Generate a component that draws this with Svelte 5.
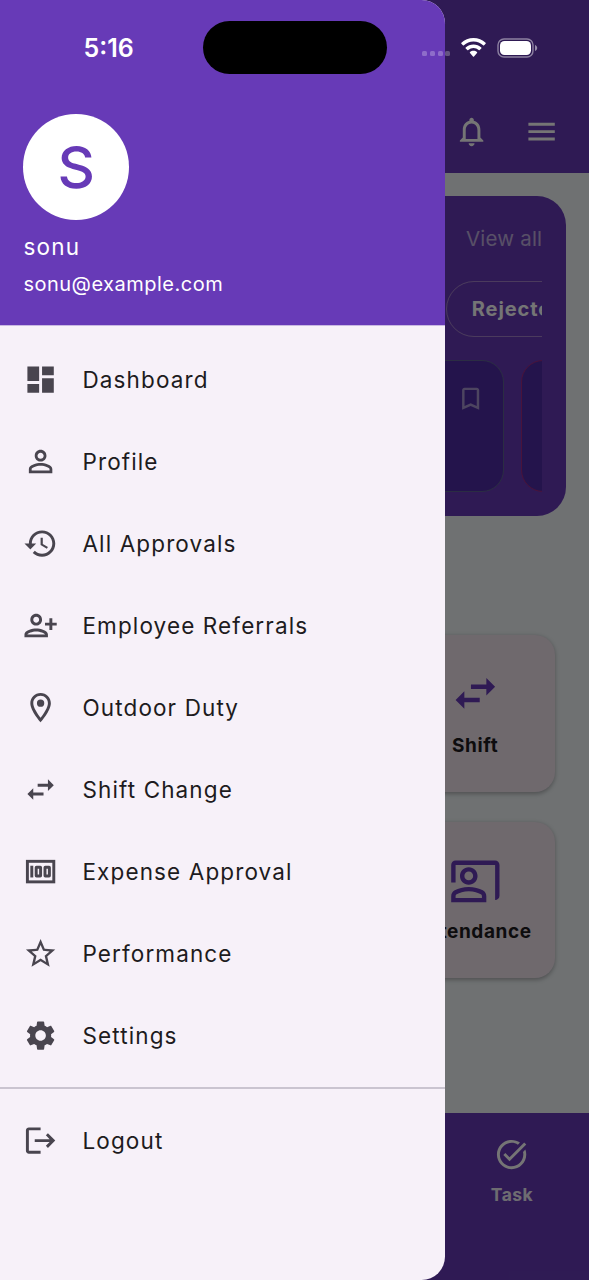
<script lang="ts">
  type MenuItem = {
    label: string;
    icon: string;
  };

  const menuItems: MenuItem[] = [
    { label: 'Dashboard', icon: 'dashboard' },
    { label: 'Profile', icon: 'person' },
    { label: 'All Approvals', icon: 'history' },
    { label: 'Employee Referrals', icon: 'personAdd' },
    { label: 'Outdoor Duty', icon: 'location' },
    { label: 'Shift Change', icon: 'swap' },
    { label: 'Expense Approval', icon: 'money' },
    { label: 'Performance', icon: 'star' },
    { label: 'Settings', icon: 'settings' },
  ];

  const tiles: MenuItem[] = [
    { label: 'Shift', icon: 'swap' },
    { label: 'Attendance', icon: 'coPresent' },
  ];

  const icons: Record<string, string> = {
    dashboard: 'M3 13h8V3H3v10zm0 8h8v-6H3v6zm10 0h8V11h-8v10zm0-18v6h8V3h-8z',
    person:
      'M12 5.9c1.16 0 2.1.94 2.1 2.1s-.94 2.1-2.1 2.1S9.9 9.16 9.9 8s.94-2.1 2.1-2.1m0 9c2.97 0 6.1 1.46 6.1 2.1v1.1H5.9V17c0-.64 3.13-2.1 6.1-2.1M12 4C9.79 4 8 5.79 8 8s1.79 4 4 4 4-1.79 4-4-1.79-4-4-4zm0 9c-2.67 0-8 1.34-8 4v3h16v-3c0-2.66-5.33-4-8-4z',
    history:
      'M13 3c-4.97 0-9 4.03-9 9H1l3.89 3.89.07.14L9 12H6c0-3.87 3.13-7 7-7s7 3.13 7 7-3.13 7-7 7c-1.93 0-3.68-.79-4.94-2.06l-1.42 1.42C8.27 19.99 10.51 21 13 21c4.97 0 9-4.03 9-9s-4.03-9-9-9zm-1 5v5l4.28 2.54.72-1.21-3.5-2.08V8H12z',
    personAdd:
      'M13 8c0-2.21-1.79-4-4-4S5 5.79 5 8s1.79 4 4 4 4-1.79 4-4zm-2 0c0 1.1-.9 2-2 2s-2-.9-2-2 .9-2 2-2 2 .9 2 2zM1 18v2h16v-2c0-2.66-5.33-4-8-4s-8 1.34-8 4zm2 0c.2-.71 3.3-2 6-2 2.69 0 5.78 1.28 6 2H3zm17-3v-3h3v-2h-3V7h-2v3h-3v2h3v3h2z',
    location:
      'M12 2C8.13 2 5 5.13 5 9c0 5.25 7 13 7 13s7-7.75 7-13c0-3.87-3.13-7-7-7zM7 9c0-2.76 2.24-5 5-5s5 2.24 5 5c0 2.88-2.88 7.19-5 9.88C9.92 16.21 7 11.85 7 9zm5-2.5a2.5 2.5 0 1 0 0 5 2.5 2.5 0 0 0 0-5z',
    swap: 'M6.99 11L3 15l3.99 4v-3H14v-2H6.99v-3zM21 9l-3.99-4v3H10v2h7.01v3L21 9z',
    star: 'M22 9.24l-7.19-.62L12 2 9.19 8.63 2 9.24l5.46 4.73L5.82 21 12 17.27 18.18 21l-1.63-7.03L22 9.24zM12 15.4l-3.76 2.27 1-4.28-3.32-2.88 4.38-.38L12 6.1l1.71 4.04 4.38.38-3.32 2.88 1 4.28L12 15.4z',
    settings:
      'M19.14 12.94c.04-.3.06-.61.06-.94 0-.32-.02-.64-.07-.94l2.03-1.58c.18-.14.23-.41.12-.61l-1.92-3.32c-.12-.22-.37-.29-.59-.22l-2.39.96c-.5-.38-1.03-.7-1.62-.94l-.36-2.54c-.04-.24-.24-.41-.48-.41h-3.84c-.24 0-.43.17-.47.41l-.36 2.54c-.59.24-1.13.57-1.62.94l-2.39-.96c-.22-.08-.47 0-.59.22L2.74 8.87c-.12.21-.08.47.12.61l2.03 1.58c-.05.3-.09.63-.09.94s.02.64.07.94l-2.03 1.58c-.18.14-.23.41-.12.61l1.92 3.32c.12.22.37.29.59.22l2.39-.96c.5.38 1.03.7 1.62.94l.36 2.54c.05.24.24.41.48.41h3.84c.24 0 .44-.17.47-.41l.36-2.54c.59-.24 1.13-.56 1.62-.94l2.39.96c.22.08.47 0 .59-.22l1.92-3.32c.12-.22.07-.47-.12-.61l-2.01-1.58zM12 15.6c-1.98 0-3.6-1.62-3.6-3.6s1.62-3.6 3.6-3.6 3.6 1.62 3.6 3.6-1.62 3.6-3.6 3.6z',
    logout:
      'M17 7l-1.41 1.41L18.17 11H8v2h10.17l-2.58 2.58L17 17l5-5zM4 5h8V3H4c-1.1 0-2 .9-2 2v14c0 1.1.9 2 2 2h8v-2H4V5z',
    coPresent:
      'M21 3H3c-1.1 0-2 .9-2 2v8h2V5h18v16c1.1 0 2-.9 2-2V5c0-1.1-.9-2-2-2zM9 14c2.21 0 4-1.79 4-4s-1.79-4-4-4-4 1.79-4 4 1.79 4 4 4zm0-6c1.1 0 2 .9 2 2s-.9 2-2 2-2-.9-2-2 .9-2 2-2zm6.39 8.56C13.71 15.7 11.53 15 9 15s-4.71.7-6.39 1.56C1.61 17.07 1 18.1 1 19.22V22h16v-2.78c0-1.12-.61-2.15-1.61-2.66zM15 20H3v-.78c0-.38.2-.72.52-.88C4.71 17.73 6.63 17 9 17s4.29.73 5.48 1.34c.32.16.52.5.52.88V20z',
    bell: 'M12 22c1.1 0 2-.9 2-2h-4c0 1.1.9 2 2 2zm6-6v-5c0-3.07-1.63-5.64-4.5-6.32V4c0-.83-.67-1.5-1.5-1.5s-1.5.67-1.5 1.5v.68C7.64 5.36 6 7.92 6 11v5l-2 2v1h16v-1l-2-2zm-2 1H8v-6c0-2.48 1.51-4.5 4-4.5s4 2.02 4 4.5v6z',
    menu: 'M3 18h18v-2H3v2zm0-5h18v-2H3v2zm0-7v2h18V6H3z',
    bookmark: 'M17 3H7c-1.1 0-2 .9-2 2v16l7-3 7 3V5c0-1.1-.9-2-2-2zm0 15l-5-2.18L7 18V5h10v13z',
    task: 'M22 5.18L10.59 16.6l-4.24-4.24 1.41-1.41 2.83 2.83 10-10L22 5.18zm-2.21 5.04c.13.57.21 1.17.21 1.78 0 4.42-3.58 8-8 8s-8-3.58-8-8 3.58-8 8-8c1.58 0 3.04.46 4.28 1.25l1.44-1.44C16.1 2.67 14.13 2 12 2 6.48 2 2 6.48 2 12s4.48 10 10 10 10-4.48 10-10c0-1.19-.22-2.33-.6-3.39l-1.61 1.61z',
  };
</script>

{#snippet icon(name: string)}
  <svg class="icon" viewBox="0 0 24 24" aria-hidden="true">
    {#if name === 'money'}
      <g fill="none" stroke="currentColor" stroke-width="2">
        <rect x="3" y="5" width="18" height="14" />
        <rect x="9" y="9" width="3" height="6" rx=".2" />
        <rect x="15" y="9" width="3" height="6" rx=".2" />
        <line x1="6" y1="8" x2="6" y2="16" />
      </g>
    {:else}
      <path d={icons[name]} />
    {/if}
  </svg>
{/snippet}

<div class="phone">
  <div class="screen">
    <header class="app-bar">
      <button aria-label="Notifications">{@render icon('bell')}</button>
      <button aria-label="Menu">{@render icon('menu')}</button>
    </header>

    <main>
      <section class="panel">
        <div class="panel-body">
          <a class="view-all" href="#all">View all</a>
          <div class="chips">
            <span class="chip">Rejected</span>
          </div>
          <div class="requests">
            <div class="request">{@render icon('bookmark')}</div>
            <div class="request rejected"></div>
          </div>
        </div>
      </section>

      <section class="tiles">
        {#each tiles as tile}
          <div class="tile">
            {@render icon(tile.icon)}
            <span>{tile.label}</span>
          </div>
        {/each}
      </section>
    </main>

    <nav class="bottom-nav">
      <div class="nav-item">
        {@render icon('task')}
        <span>Task</span>
      </div>
    </nav>
  </div>

  <div class="scrim"></div>

  <aside class="drawer">
    <div class="account">
      <div class="avatar">S</div>
      <div class="name">sonu</div>
      <div class="email">sonu@example.com</div>
    </div>
    <ul>
      {#each menuItems as item}
        <li>{@render icon(item.icon)}<span>{item.label}</span></li>
      {/each}
    </ul>
    <hr />
    <ul class="footer">
      <li>{@render icon('logout')}<span>Logout</span></li>
    </ul>
  </aside>

  <div class="status-bar">
    <span class="time">5:16</span>
    <span class="island"></span>
    <span class="signal"><i></i><i></i><i></i><i></i></span>
    <svg class="wifi" viewBox="0 0 25 19" aria-hidden="true">
      <path d="M12.5 0C7.8 0 3.5 1.8.4 4.8c-.3.3-.3.7 0 1l1.5 1.5c.3.3.7.3 1 0A13.8 13.8 0 0 1 12.5 3.5c3.7 0 7 1.4 9.6 3.8.3.3.7.3 1 0l1.5-1.5c.3-.3.3-.7 0-1C21.5 1.8 17.2 0 12.5 0z" />
      <path d="M12.5 6.5c-3 0-5.7 1.1-7.8 3-.3.3-.3.7 0 1l1.6 1.5c.3.3.7.3 1 0a7.7 7.7 0 0 1 10.4 0c.3.3.7.3 1 0l1.6-1.5c.3-.3.3-.7 0-1-2.1-1.9-4.8-3-7.8-3z" />
      <path d="M12.5 12.7c-1.3 0-2.5.5-3.5 1.3-.3.3-.3.7 0 1l3 3.5c.3.3.7.3 1 0l3-3.5c.3-.3.3-.7 0-1-1-.8-2.2-1.3-3.5-1.3z" />
    </svg>
    <svg class="battery" viewBox="0 0 41 20" aria-hidden="true">
      <rect x="1" y="1" width="35" height="18" rx="6" fill="none" stroke="#fff" stroke-opacity=".45" stroke-width="1.4" />
      <rect x="3" y="3" width="31" height="14" rx="4.5" />
      <path d="M38 7c1.4.5 2.2 1.6 2.2 3s-.8 2.5-2.2 3z" fill-opacity=".5" />
    </svg>
  </div>
</div>

<style>
  :global(body) {
    margin: 0;
  }

  .phone {
    position: relative;
    width: 589px;
    height: 1280px;
    overflow: hidden;
    font-family: Inter, 'Liberation Sans', sans-serif;
  }

  .icon {
    display: block;
    flex: none;
    width: 35.2px;
    height: 35.2px;
    fill: currentColor;
  }

  .screen {
    display: flex;
    flex-direction: column;
    height: 100%;
    background: #f1f6f8;
  }

  .app-bar {
    box-sizing: border-box;
    height: 173px;
    display: flex;
    justify-content: flex-end;
    gap: 35px;
    padding: 114px 29.5px 0 0;
    background: #673ab7;
    color: #fff;
  }

  .app-bar button {
    height: 35.2px;
    padding: 0;
    border: 0;
    background: none;
    color: inherit;
  }

  main {
    flex: 1;
    padding: 23.4px;
  }

  .panel {
    box-sizing: border-box;
    height: 319.5px;
    padding: 26px 23.4px 0;
    border-radius: 29px;
    background: #673ab7;
    color: #fff;
  }

  .panel-body {
    overflow: hidden;
  }

  .view-all {
    display: block;
    color: rgba(255, 255, 255, 0.6);
    font-size: 20.5px;
    line-height: 34px;
    letter-spacing: 0.2px;
    text-align: right;
    text-decoration: none;
  }

  .chips {
    display: flex;
    width: max-content;
    margin: 25px 0 23px 399.5px;
  }

  .chip {
    padding: 1px 24.5px 0;
    border: 1.5px solid rgba(255, 240, 230, 0.4);
    border-radius: 28px;
    font-size: 20px;
    font-weight: 700;
    line-height: 53px;
    letter-spacing: 0.9px;
  }

  .requests {
    display: flex;
    gap: 17.5px;
  }

  .request {
    box-sizing: border-box;
    flex: none;
    width: 457px;
    height: 132px;
    display: flex;
    justify-content: flex-end;
    padding: 23px 17px;
    border: 1.5px solid #5e6393;
    border-radius: 22px;
    background: #502da5;
    color: rgba(255, 255, 255, 0.5);
  }

  .request .icon {
    width: 29.3px;
    height: 29.3px;
  }

  .request.rejected {
    border-color: #a02a80;
  }

  .tiles {
    display: grid;
    justify-content: end;
    gap: 30px;
    padding: 119.5px 11px 0 0;
  }

  .tile {
    box-sizing: border-box;
    width: 159px;
    height: 156.5px;
    display: flex;
    flex-direction: column;
    align-items: center;
    gap: 10.5px;
    padding-top: 32px;
    border-radius: 20px;
    background: #f1e4ee;
    box-shadow: 0 1.5px 4px rgba(0, 0, 0, 0.28);
    color: #673ab7;
  }

  .tile .icon {
    width: 52.7px;
    height: 52.7px;
  }

  .tile span {
    color: #1d1b20;
    font-size: 19px;
    font-weight: 700;
    line-height: 30px;
    letter-spacing: 0.6px;
  }

  .bottom-nav {
    box-sizing: border-box;
    height: 167px;
    display: flex;
    justify-content: flex-end;
    padding: 24px 0 0;
    background: #673ab7;
    color: #fff;
  }

  .nav-item {
    width: 154px;
    display: flex;
    flex-direction: column;
    align-items: center;
    gap: 9.5px;
    font-size: 17.5px;
    font-weight: 700;
    line-height: 26px;
    letter-spacing: 0.5px;
  }

  .nav-item span {
    opacity: 0.9;
  }

  .scrim {
    position: absolute;
    inset: 0;
    background: rgba(0, 0, 0, 0.54);
  }

  .drawer {
    position: absolute;
    top: 0;
    bottom: 0;
    left: 0;
    width: 445.4px;
    overflow: hidden;
    border-radius: 0 23.4px 23.4px 0;
    background: #f7f1f9;
    color: #1d1b20;
  }

  .account {
    box-sizing: border-box;
    height: 326px;
    padding: 114px 23.4px 0;
    border-bottom: 1.5px solid #c9b8e2;
    background: #673ab7;
    color: #fff;
  }

  .avatar {
    display: grid;
    place-items: center;
    width: 105.5px;
    height: 105.5px;
    border-radius: 50%;
    background: #fff;
    color: #673ab7;
    font-size: 58px;
    font-weight: 500;
    line-height: 70px;
  }

  .name {
    margin-top: 11px;
    font-size: 22.5px;
    line-height: 32px;
    letter-spacing: 1.2px;
  }

  .email {
    margin-top: 6px;
    font-size: 20px;
    line-height: 30px;
    letter-spacing: 0.5px;
  }

  ul {
    margin: 0;
    padding: 13px 0 0;
    list-style: none;
  }

  .footer {
    padding: 0;
  }

  li {
    height: 82px;
    display: flex;
    align-items: center;
    gap: 23.9px;
    padding-left: 23.4px;
    font-size: 22.5px;
    letter-spacing: 1.12px;
  }

  li span {
    padding-bottom: 1px;
  }

  li .icon {
    color: #49454f;
  }

  hr {
    height: 1.5px;
    margin: 10px 0 11.5px;
    border: 0;
    background: #cac4d0;
  }

  .status-bar {
    position: absolute;
    top: 20.5px;
    left: 0;
    right: 0;
    height: 53.5px;
    display: flex;
    align-items: center;
    color: #fff;
    fill: #fff;
  }

  .time {
    width: 119px;
    padding: 1px 0 0 83.5px;
    font-size: 25px;
    font-weight: 600;
  }

  .island {
    width: 184px;
    height: 53.5px;
    border-radius: 27px;
    background: #000;
  }

  .signal {
    display: flex;
    gap: 2.8px;
    margin: 13px 0 0 35.5px;
  }

  .signal i {
    width: 5px;
    height: 5px;
    border-radius: 1.5px;
    background: rgba(255, 255, 255, 0.26);
  }

  .wifi {
    width: 25px;
    height: 19px;
    margin: 1px 0 0 10.8px;
  }

  .battery {
    width: 41px;
    height: 20px;
    margin: 1px 0 0 10.5px;
  }
</style>
